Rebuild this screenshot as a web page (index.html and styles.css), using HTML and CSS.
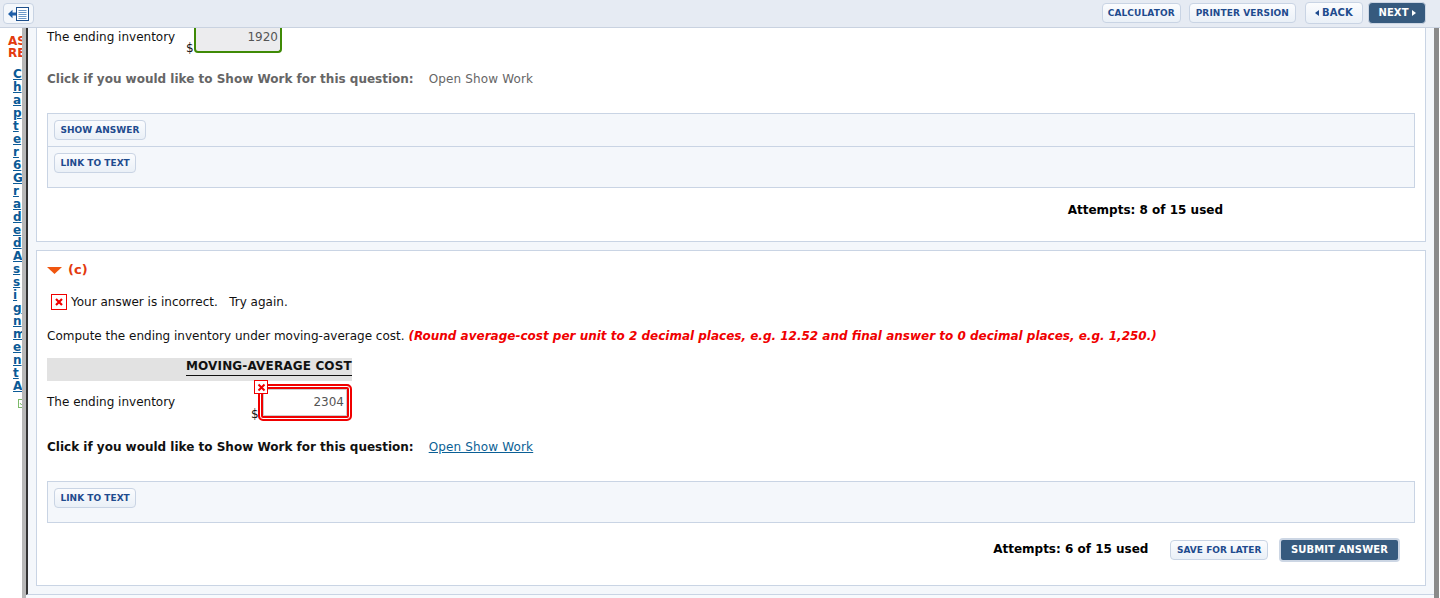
FILE: index.html
```html
<!DOCTYPE html>
<html lang="en">
<head>
<meta charset="utf-8">
<title>Assignment</title>
<link rel="stylesheet" href="styles.css">
</head>
<body>
<header class="topbar">
  <button class="toggle" aria-label="Toggle sidebar">
    <svg width="21" height="14" viewBox="0 0 21 14"><path d="M0 7 4.500 2.800V5.500H8V8.500H4.500V11.200Z" fill="#1f5fa8"/><rect x="8.500" y=".5" width="12" height="13" fill="#fff" stroke="#1d4f8c" stroke-width="1"/><path d="M10.500 3.500H18.500M10.500 5.500H18.500M10.500 7.500H18.500M10.500 9.500H18.500M10.500 11.500H18.500" stroke="#2f6db0" stroke-width=".7"/></svg>
  </button>
  <nav class="topnav">
    <a class="btn">CALCULATOR</a>
    <a class="btn btn-print">PRINTER VERSION</a>
    <a class="btn btn-nav"><span class="arrow-left"></span>BACK</a>
    <a class="btn btn-nav btn-dark"><span>NEXT</span><span class="arrow-right"></span></a>
  </nav>
</header>
<div class="layout">
  <aside class="side">
    <div class="side-title">AS<br>RE</div>
    <a class="side-link">Chapter6GradedAssignmentA</a>
    <svg class="side-check" width="6" height="9" viewBox="0 0 6 9"><rect x=".5" y=".5" width="8" height="8" fill="#fff" stroke="#7dba6a"/><path d="M2 4 3.500 6 6 2.500" fill="none" stroke="#7dba6a"/></svg>
  </aside>
  <div class="content">
    <main class="scroll">
      <section class="card card-first">
        <div class="inv-row">
          <span class="inv-label">The ending inventory</span>
          <span class="dollar">$</span>
          <span class="answer answer-ok">1920</span>
        </div>
        <p class="work work-off"><b>Click if you would like to Show Work for this question:</b><span class="work-link">Open Show Work</span></p>
        <div class="tools">
          <div class="tool-row tool-split"><a class="btn btn-tool">SHOW ANSWER</a></div>
          <div class="tool-row tool-tall"><a class="btn btn-tool">LINK TO TEXT</a></div>
        </div>
        <div class="attempts-row attempts-first"><b>Attempts: 8 of 15 used</b></div>
      </section>
      <section class="card card-second">
        <h2 class="part"><svg width="15" height="7" viewBox="0 0 15 7"><path d="M0 0H15L7.500 7Z" fill="#f0560f"/></svg>(c)</h2>
        <p class="wrong">
          <svg width="16" height="16" viewBox="0 0 16 16"><rect x=".5" y=".5" width="15" height="15" fill="#fff" stroke="#f00000"/><path d="M5 5 11 11M11 5 5 11" stroke="#f00000" stroke-width="2.200"/></svg>
          <span>Your answer is incorrect.&nbsp;&nbsp; Try again.</span>
        </p>
        <p class="question">Compute the ending inventory under moving-average cost. <b><i>(Round average-cost per unit to 2 decimal places, e.g. 12.52 and final answer to 0 decimal places, e.g. 1,250.)</i></b></p>
        <div class="table-head"><span>MOVING-AVERAGE COST</span></div>
        <div class="inv-row inv-row-bad">
          <span class="inv-label">The ending inventory</span>
          <span class="dollar">$</span>
          <span class="answer answer-bad">2304<span class="badge"><svg width="9" height="9" viewBox="0 0 9 9"><path d="M1.500 1.500 7.500 7.500M7.500 1.500 1.500 7.500" stroke="#f00000" stroke-width="2"/></svg></span></span>
        </div>
        <p class="work"><b>Click if you would like to Show Work for this question:</b><a class="work-link work-active">Open Show Work</a></p>
        <div class="tools">
          <div class="tool-row tool-tall"><a class="btn btn-tool">LINK TO TEXT</a></div>
        </div>
        <div class="attempts-row attempts-second">
          <b>Attempts: 6 of 15 used</b>
          <a class="btn btn-tool">SAVE FOR LATER</a>
          <a class="btn btn-submit">SUBMIT ANSWER</a>
        </div>
      </section>
    </main>
  </div>
</div>
</body>
</html>
```

FILE: styles.css
```css
* { box-sizing: border-box; }
html, body { margin: 0; height: 598px; overflow: hidden; background: #fff; }
body { font: 12px/16px "DejaVu Sans", Verdana, sans-serif; color: #111; }
p { margin: 0; }

.topbar { height: 28px; display: flex; justify-content: space-between; align-items: flex-start; background: #e6ebf3; border-bottom: 1px solid #c9d2e0; padding: 3px 14px 0 3px; }
.toggle { width: 31px; height: 21px; padding: 0; display: flex; align-items: center; justify-content: center; background: #f4f7fb; border: 1px solid #c8d3e3; border-radius: 4px; }
.topnav { display: flex; align-items: center; gap: 8px; height: 20px; }

.btn { display: inline-flex; align-items: center; justify-content: center; height: 20px; padding: 0 5px; font-size: 9px; font-weight: bold; letter-spacing: .1px; color: #1f4b8e; background: linear-gradient(#fbfcfe, #eaf0f7); border: 1px solid #c9d4e4; border-radius: 4px; white-space: nowrap; }
.btn-print { padding: 0 6px; margin-right: 1px; }
.btn-nav { width: 58px; height: 22px; padding: 0; font-size: 10px; gap: 3px; }
.btn-dark { margin-left: -3px; color: #fff; background: #365a7e; border: 1px solid #ccd6e4; }
.arrow-left { border: 3.500px solid transparent; border-left: 0; border-right: 4px solid #1f4b8e; }
.arrow-right { border: 3.500px solid transparent; border-right: 0; border-left: 4px solid #fff; }

.layout { display: flex; height: 570px; }
.side { width: 22px; flex: none; padding: 7px 0 0 8px; overflow: hidden; }
.side-title { font-size: 12px; line-height: 12px; font-weight: bold; color: #e33a0e; height: 24px; white-space: nowrap; }
.side-link { display: block; width: 9px; margin: 9px 0 0 5px; line-height: 13px; font-weight: bold; color: #0b5a96; text-decoration: underline; word-break: break-all; }
.side-check { display: block; margin: 6px 0 0 10px; }

.content { width: 1417px; flex: none; height: 570px; background: #f8fafd; border-left: 4px solid #b8b8b8; border-right: 5px solid #8a8a8a; }
.scroll { height: 567px; overflow: hidden; padding: 0 8px; background: #f4f7fb; border-left: 2px solid #333; border-bottom: 1px solid #c9d4e4; }

.card { background: #fff; border: 1px solid #c9d4e4; padding: 0 10px; }
.card-first { height: 227px; margin-top: -13px; }
.card-second { height: 336px; margin-top: 8px; }

.inv-row { display: flex; align-items: flex-start; }
.inv-label { width: 139px; flex: none; }
.card-first .inv-row { height: 38px; }
.card-first .inv-label { margin-top: 13px; }
.dollar { flex: none; width: 8px; }
.card-first .dollar { margin-top: 24px; }
.answer { display: block; text-align: right; color: #555; background: #ececee; }
.answer-ok { width: 88px; height: 37px; padding: 13px 2px 0 0; border: 2px solid #3f8a06; border-top: 0; border-radius: 4px; }
.inv-row-bad { padding-top: 3px; height: 43px; }
.inv-row-bad .inv-label { width: 204px; margin-top: 10px; }
.inv-row-bad .dollar { width: 7px; margin-top: 22px; }
.answer-bad { position: relative; width: 94px; height: 37px; padding: 8px 6px 0 0; background: #fff; border: 2px solid #f00000; border-radius: 5px; box-shadow: inset 0 0 0 1px #fff, inset 0 0 0 3px #f00000, inset 0 0 0 4px #ccc; }
.badge { position: absolute; left: -6px; top: -6px; width: 14px; height: 14px; display: flex; align-items: center; justify-content: center; background: #fff; border: 1px solid #f00000; }

.work { display: flex; gap: 15px; }
.work-off { color: #666; margin-top: 17px; }
.card-second .work { margin-top: 15px; }
.work-link { color: #666; letter-spacing: .15px; }
.work-active { color: #0b5f95; text-decoration: underline; }

.tools { background: #f4f7fb; border: 1px solid #c9d4e4; margin-top: 26px; }
.tool-row { padding: 6px 6px 0; }
.tool-split { height: 33px; border-bottom: 1px solid #c9d4e4; }
.tool-tall { height: 40px; }
.btn-tool { height: 20px; letter-spacing: .02px; padding: 0 5.5px; }

.attempts-row { display: flex; justify-content: flex-end; align-items: center; color: #000; }
.attempts-first { margin-top: 14px; padding-right: 192px; }
.attempts-second { margin-top: 15px; height: 24px; padding-right: 15px; }
.attempts-second b { margin-bottom: 2px; }
.attempts-second .btn-tool { margin-left: 22px; }
.btn-submit { height: 24px; margin-left: 11px; padding: 0 10px; font-size: 10px; color: #fff; background: #365a7e; border: 2px solid #ccd6e4; }

.part { display: flex; align-items: center; gap: 6px; margin: 11px 0 0; height: 16px; font-size: 13px; font-weight: bold; color: #e33a0e; }
.wrong { display: flex; align-items: center; gap: 4px; margin: 16px 0 0 4px; height: 16px; }
.question { margin-top: 18px; }
.question b { color: #f00000; }
.table-head { display: flex; justify-content: flex-end; width: 305px; height: 23px; margin-top: 14px; background: #e2e2e2; }
.table-head span { width: 166px; height: 18px; font-weight: bold; line-height: 16px; letter-spacing: .15px; border-bottom: 1px solid #111; white-space: nowrap; }
```
